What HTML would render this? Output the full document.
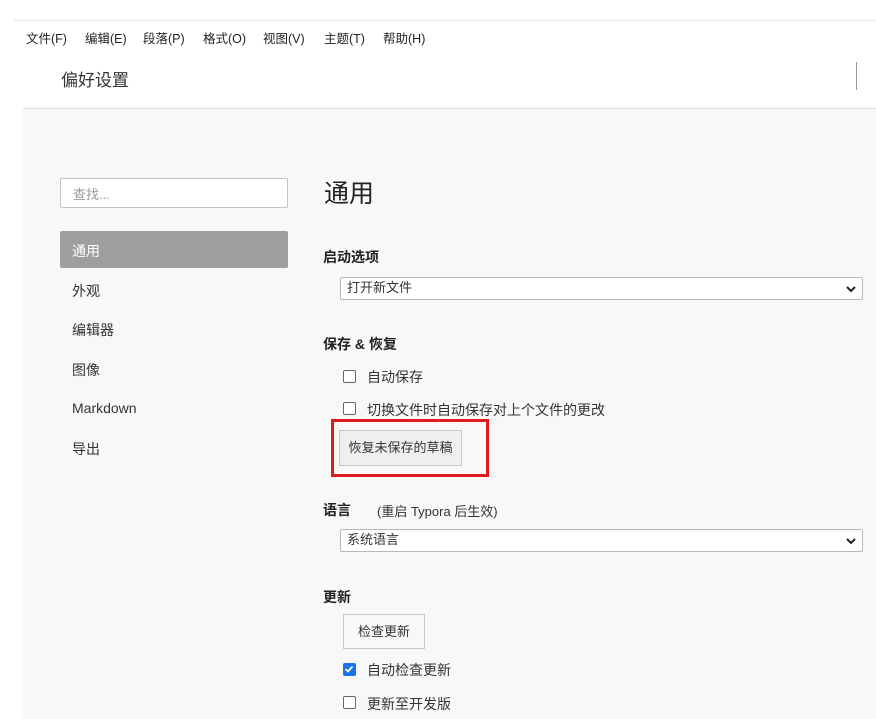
<!DOCTYPE html>
<html><head><meta charset="utf-8"><style>
*{margin:0;padding:0;box-sizing:border-box}
body{width:876px;height:719px;overflow:hidden;background:#fff;font-family:"Liberation Sans","Noto Sans CJK SC",sans-serif;color:#333;position:relative}
.a{position:absolute;white-space:nowrap}
.topline{position:absolute;left:14px;top:19px;width:862px;height:3px;background:#f1f3f5}
.content{position:absolute;left:23px;top:108px;width:853px;height:611px;background:#f8f8f8;border-top:1px solid #e2e2e2;box-shadow:0 -1px 3px rgba(0,0,0,.06)}
.sel{position:absolute;background:#fff;border:1px solid #b8b8b8;border-radius:2px;height:23px;font-size:13px;line-height:19px;padding:0 6px;color:#333}
.sel svg{position:absolute;right:5px;top:6px}
.cb{position:absolute;width:13px;height:13px;border:1.5px solid #666;border-radius:2px;background:#fff}
.btn{position:absolute;background:#efefef;border:1px solid #c8c8c8;font-size:13px;color:#333;text-align:center}
h4{position:absolute;font-size:14px;font-weight:bold;color:#222;white-space:nowrap}
.item{position:absolute;left:72px;font-size:14px;color:#333}
.lbl{position:absolute;font-size:14px;color:#333;white-space:nowrap}
.m{position:absolute;top:28px;font-size:12.5px;color:#222;white-space:nowrap}
</style></head><body>
<div class="topline"></div>
<div class="m" style="left:26px">文件(F)</div>
<div class="m" style="left:85px">编辑(E)</div>
<div class="m" style="left:143px">段落(P)</div>
<div class="m" style="left:203px">格式(O)</div>
<div class="m" style="left:263px">视图(V)</div>
<div class="m" style="left:324px">主题(T)</div>
<div class="m" style="left:383px">帮助(H)</div>
<div class="a" style="left:61px;top:66px;font-size:17px;color:#333">偏好设置</div>
<div class="a" style="left:856px;top:62px;width:1px;height:28px;background:#999"></div>
<div class="content"></div>
<div class="a" style="left:60px;top:178px;width:228px;height:30px;background:#fff;border:1px solid #c4c4c4;border-radius:2px;font-size:13px;color:#999;padding:5px 12px">查找...</div>
<div class="a" style="left:60px;top:231px;width:228px;height:37px;background:#9e9e9e;border-radius:2px;font-size:14px;color:#fff;padding:10px 12px">通用</div>
<div class="item" style="top:281px">外观</div>
<div class="item" style="top:320px">编辑器</div>
<div class="item" style="top:360px">图像</div>
<div class="item" style="top:400px">Markdown</div>
<div class="item" style="top:439px">导出</div>
<div class="a" style="left:324px;top:174px;font-size:25px;color:#222">通用</div>
<h4 style="left:323px;top:247px">启动选项</h4>
<div class="sel" style="left:340px;top:277px;width:523px">打开新文件<svg width="12" height="10" viewBox="0 0 12 10"><path d="M2 3l4 4 4-4" stroke="#222" stroke-width="2" fill="none"/></svg></div>
<h4 style="left:323px;top:334px">保存 &amp; 恢复</h4>
<div class="cb" style="left:343px;top:370px"></div><div class="lbl" style="left:367px;top:367px">自动保存</div>
<div class="cb" style="left:343px;top:402px"></div><div class="lbl" style="left:367px;top:400px">切换文件时自动保存对上个文件的更改</div>
<div class="a" style="left:331px;top:419px;width:158px;height:58px;border:3px solid #e01b22"></div>
<div class="btn" style="left:339px;top:430px;width:123px;height:36px;line-height:34px">恢复未保存的草稿</div>
<h4 style="left:323px;top:500px">语言</h4><div class="lbl" style="left:377px;top:501px;font-size:13px">(重启 Typora 后生效)</div>
<div class="sel" style="left:340px;top:529px;width:523px">系统语言<svg width="12" height="10" viewBox="0 0 12 10"><path d="M2 3l4 4 4-4" stroke="#222" stroke-width="2" fill="none"/></svg></div>
<h4 style="left:323px;top:587px">更新</h4>
<div class="btn" style="left:343px;top:614px;width:82px;height:35px;line-height:33px;background:#f8f8f8">检查更新</div>
<div class="cb" style="left:343px;top:663px;background:#1a73e8;border-color:#1a73e8"><svg width="10" height="10" viewBox="0 0 10 10" style="position:absolute;left:0;top:0"><path d="M1.5 5l2.5 2.5 4.5-5" stroke="#fff" stroke-width="1.8" fill="none"/></svg></div>
<div class="lbl" style="left:367px;top:660px">自动检查更新</div>
<div class="cb" style="left:343px;top:696px"></div><div class="lbl" style="left:367px;top:694px">更新至开发版</div>
</body></html>
